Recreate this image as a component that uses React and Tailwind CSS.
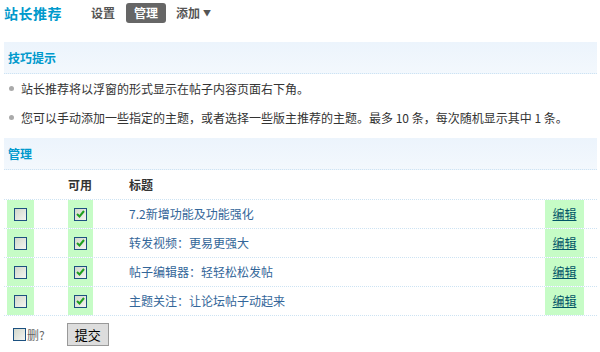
import React from "react";

const font = { fontFamily: '"Noto Sans CJK SC", "Liberation Sans", sans-serif' };

function Box({ checked }) {
  return (
    <span className="inline-flex h-[13px] w-[13px] items-center justify-center border border-[#1c5180] bg-gradient-to-br from-[#d2d8cc] to-[#f4f4f0]">
      {checked && (
        <svg width="9" height="8" viewBox="0 0 9 8">
          <path d="M1 4 L3.5 6.5 L8 1" fill="none" stroke="#1fa01f" strokeWidth="2" />
        </svg>
      )}
    </span>
  );
}

const rows = [
  "7.2新增功能及功能强化",
  "转发视频：更易更强大",
  "帖子编辑器：轻轻松松发帖",
  "主题关注：让论坛帖子动起来",
];

export default function App() {
  return (
    <div className="h-[352px] w-[600px] overflow-hidden bg-white text-[12px] text-[#333]" style={font}>
      <div className="flex h-[26px] items-center pl-[4px]">
        <span className="text-[14px] font-bold leading-none tracking-[0.5px] text-[#0099cc]">站长推荐</span>
        <span className="ml-[29px] text-[12px] font-bold text-[#555]">设置</span>
        <span className="ml-[11px] flex h-[20px] items-center rounded-[3px] bg-[#666] px-[8px] text-[12px] font-bold text-white">管理</span>
        <span className="ml-[10px] flex items-center text-[12px] font-bold text-[#555]">
          添加<span className="ml-[3px] text-[8px]">▼</span>
        </span>
      </div>
      <div className="ml-[4px] mr-[3px] mt-[16px]">
        <div className="flex h-[32px] items-center border-b border-dotted border-[#cde3f3] bg-gradient-to-b from-[#ecf4fc] to-[#f3f8fd] pl-[4px] text-[12px] font-bold text-[#0099cc]">
          技巧提示
        </div>
        <div className="flex h-[29px] items-center pl-[5px]">
          <span className="h-[5px] w-[5px] rounded-full bg-[#aaa]"></span>
          <span className="ml-[7px]">站长推荐将以浮窗的形式显示在帖子内容页面右下角。</span>
        </div>
        <div className="flex h-[29px] items-center pl-[5px]">
          <span className="h-[5px] w-[5px] rounded-full bg-[#aaa]"></span>
          <span className="ml-[7px]">您可以手动添加一些指定的主题，或者选择一些版主推荐的主题。最多 10 条，每次随机显示其中 1 条。</span>
        </div>
        <div className="mt-[6px] flex h-[32px] items-center border-b border-dotted border-[#cde3f3] bg-gradient-to-b from-[#ecf4fc] to-[#f3f8fd] pl-[4px] text-[12px] font-bold text-[#0099cc]">
          管理
        </div>
        <div className="flex h-[29px] items-center font-bold text-[#333]">
          <span className="ml-[64px] w-[25px]">可用</span>
          <span className="ml-[36px]">标题</span>
        </div>
        {rows.map((t) => (
          <div key={t} className="flex h-[29px] items-stretch border-t border-dotted border-[#cde3f3]">
            <div className="ml-[3px] flex w-[27px] items-center justify-center bg-[#c6fcc6]">
              <Box />
            </div>
            <div className="ml-[34px] flex w-[25px] items-center justify-center bg-[#c6fcc6]">
              <Box checked />
            </div>
            <div className="ml-[36px] flex flex-1 items-center text-[#336699]">{t}</div>
            <div className="mr-[13px] flex w-[39px] items-center justify-center bg-[#c6fcc6] text-[#005566] underline">
              编辑
            </div>
          </div>
        ))}
        <div className="flex h-[38px] items-center border-t border-dotted border-[#cde3f3]">
          <span className="ml-[9px] flex items-center">
            <Box />
            <span className="ml-[1px] text-[#666]">删?</span>
          </span>
          <button className="ml-[22px] h-[23px] w-[42px] border border-[#999] bg-[#ddd] text-[13px] text-black" style={font}>
            提交
          </button>
        </div>
      </div>
    </div>
  );
}
